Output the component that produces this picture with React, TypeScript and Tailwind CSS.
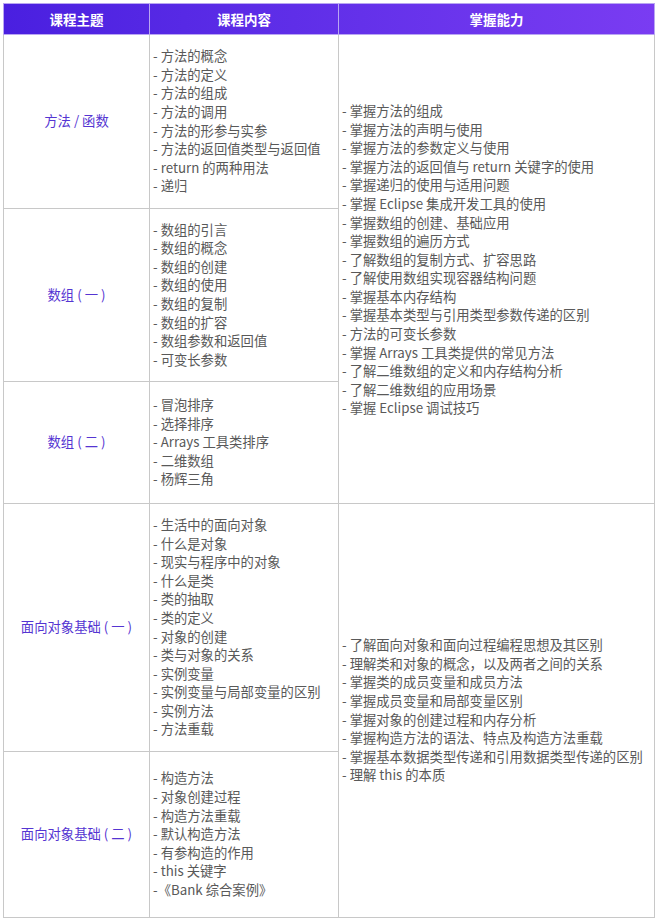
import React from 'react';

const rows = [
  {
    topic: '方法 / 函数',
    h: 174,
    items: [
      '方法的概念',
      '方法的定义',
      '方法的组成',
      '方法的调用',
      '方法的形参与实参',
      '方法的返回值类型与返回值',
      'return 的两种用法',
      '递归',
    ],
  },
  {
    topic: '数组 ( 一 )',
    h: 173,
    items: ['数组的引言', '数组的概念', '数组的创建', '数组的使用', '数组的复制', '数组的扩容', '数组参数和返回值', '可变长参数'],
  },
  {
    topic: '数组 ( 二 )',
    h: 122,
    items: ['冒泡排序', '选择排序', 'Arrays 工具类排序', '二维数组', '杨辉三角'],
  },
  {
    topic: '面向对象基础 ( 一 )',
    h: 248,
    items: [
      '生活中的面向对象',
      '什么是对象',
      '现实与程序中的对象',
      '什么是类',
      '类的抽取',
      '类的定义',
      '对象的创建',
      '类与对象的关系',
      '实例变量',
      '实例变量与局部变量的区别',
      '实例方法',
      '方法重载',
    ],
  },
  {
    topic: '面向对象基础 ( 二 )',
    h: 166,
    items: ['构造方法', '对象创建过程', '构造方法重载', '默认构造方法', '有参构造的作用', 'this 关键字', '《Bank 综合案例》'],
  },
];

const skills1 = [
  '掌握方法的组成',
  '掌握方法的声明与使用',
  '掌握方法的参数定义与使用',
  '掌握方法的返回值与 return 关键字的使用',
  '掌握递归的使用与适用问题',
  '掌握 Eclipse 集成开发工具的使用',
  '掌握数组的创建、基础应用',
  '掌握数组的遍历方式',
  '了解数组的复制方式、扩容思路',
  '了解使用数组实现容器结构问题',
  '掌握基本内存结构',
  '掌握基本类型与引用类型参数传递的区别',
  '方法的可变长参数',
  '掌握 Arrays 工具类提供的常见方法',
  '了解二维数组的定义和内存结构分析',
  '了解二维数组的应用场景',
  '掌握 Eclipse 调试技巧',
];

const skills2 = [
  '了解面向对象和面向过程编程思想及其区别',
  '理解类和对象的概念，以及两者之间的关系',
  '掌握类的成员变量和成员方法',
  '掌握成员变量和局部变量区别',
  '掌握对象的创建过程和内存分析',
  '掌握构造方法的语法、特点及构造方法重载',
  '掌握基本数据类型传递和引用数据类型传递的区别',
  '理解 this 的本质',
];

function List({ items }: { items: string[] }) {
  return (
    <div>
      {items.map((t) => (
        <div key={t} className="whitespace-nowrap">
          {t.startsWith('《') ? '-' : '- '}
          {t}
        </div>
      ))}
    </div>
  );
}

export default function App() {
  return (
    <div
      className="bg-white w-[658px] h-[920px] pt-[3px] pl-[3px] text-[13.33px] leading-[18.6px] text-[#595959]"
      style={{ fontFamily: '"Noto Sans CJK SC", "Noto Sans", sans-serif' }}
    >
      <table className="w-[651px] border-collapse table-fixed">
        <colgroup>
          <col className="w-[146px]" />
          <col className="w-[189px]" />
          <col className="w-[316px]" />
        </colgroup>
        <thead>
          <tr className="h-[31px] bg-gradient-to-r from-[#4a1fe0] to-[#7a3cf2] text-white font-bold text-[13.5px]">
            <th className="border border-[#b9a6f2] text-center">课程主题</th>
            <th className="border border-[#b9a6f2] text-center">课程内容</th>
            <th className="border border-[#b9a6f2] text-center">掌握能力</th>
          </tr>
        </thead>
        <tbody>
          {rows.map((r, i) => (
            <tr key={r.topic} style={{ height: r.h }}>
              <td className="border border-[#c8c8c8] text-center align-middle text-[#5535d2]">{r.topic}</td>
              <td className="border border-[#c8c8c8] align-middle px-[3px]">
                <List items={r.items} />
              </td>
              {i === 0 && (
                <td rowSpan={3} className="border border-[#c8c8c8] align-middle px-[3px] pb-[18px]">
                  <List items={skills1} />
                </td>
              )}
              {i === 3 && (
                <td rowSpan={2} className="border border-[#c8c8c8] align-middle px-[3px]">
                  <List items={skills2} />
                </td>
              )}
            </tr>
          ))}
        </tbody>
      </table>
    </div>
  );
}
